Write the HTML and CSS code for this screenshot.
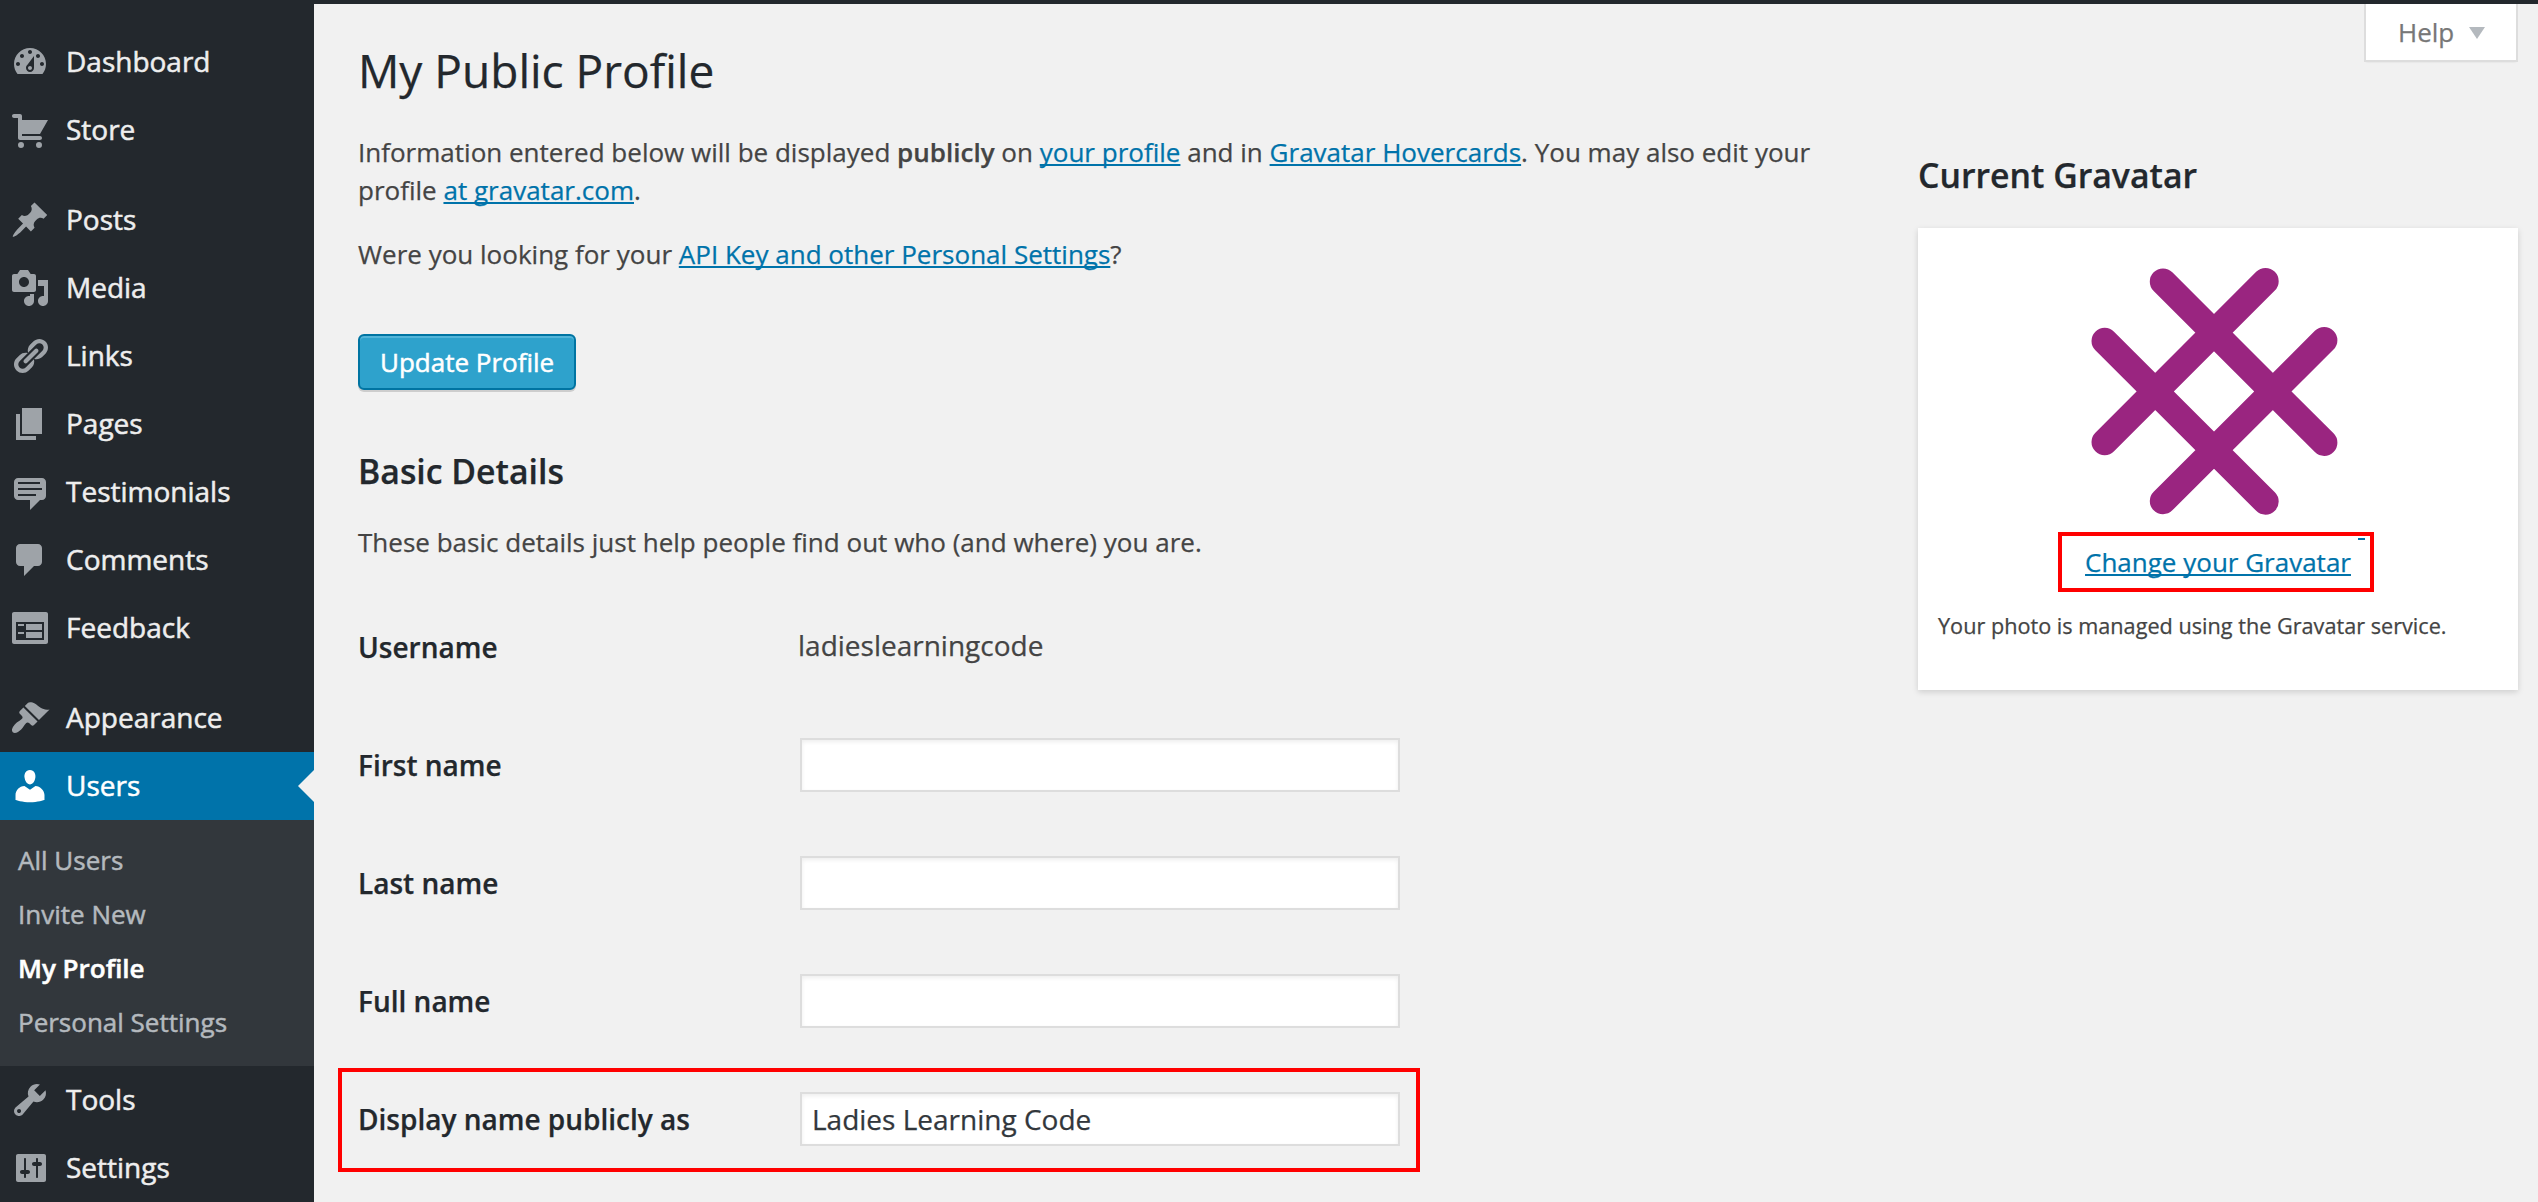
FILE: index.html
```html
<!DOCTYPE html>
<html lang="en">
<head>
<meta charset="utf-8">
<title>My Public Profile</title>
<link rel="stylesheet" href="styles.css">
</head>
<body>
<nav class="menu">
  <a class="item"><svg class="icon" viewBox="0 0 20 20"><path fill-rule="evenodd" d="M3.76 16h12.48c1.1-1.37 1.76-3.11 1.76-5 0-4.42-3.58-8-8-8s-8 3.58-8 8c0 1.89.66 3.63 1.76 5zM10 4c.55 0 1 .45 1 1s-.45 1-1 1-1-.45-1-1 .45-1 1-1zM6 6c.55 0 1 .45 1 1s-.45 1-1 1-1-.45-1-1 .45-1 1-1zm8 0c.55 0 1 .45 1 1s-.45 1-1 1-1-.45-1-1 .45-1 1-1zm-5.37 5.55L12 7v6c0 1.1-.9 2-2 2s-2-.9-2-2c0-.57.24-1.08.63-1.45zM4 10c.55 0 1 .45 1 1s-.45 1-1 1-1-.45-1-1 .45-1 1-1zm12 0c.55 0 1 .45 1 1s-.45 1-1 1-1-.45-1-1 .45-1 1-1zm-6 2c-.55 0-1 .45-1 1s.45 1 1 1 1-.45 1-1-.45-1-1-1z"/></svg><span>Dashboard</span></a>
  <a class="item"><svg class="icon" viewBox="0 0 20 20"><path d="M6 13h9c.55 0 1 .45 1 1s-.45 1-1 1H5c-.55 0-1-.45-1-1V4H2c-.55 0-1-.45-1-1s.45-1 1-1h3c.55 0 1 .45 1 1v2h13l-4 7H6v1zM5.500 16a1.500 1.500 0 1 1 0 3 1.500 1.500 0 0 1 0-3zM14.500 16a1.500 1.500 0 1 1 0 3 1.500 1.500 0 0 1 0-3z"/></svg><span>Store</span></a>
  <div class="separator"></div>
  <a class="item"><svg class="icon" viewBox="0 0 20 20"><path d="M10.440 3.020l1.820-1.820 6.360 6.350-1.830 1.820c-1.050-.68-2.480-.57-3.410.36l-.75.75c-.92.93-1.040 2.350-.35 3.410l-1.830 1.820-2.410-2.410-2.800 2.790c-.42.42-3.380 2.710-3.800 2.290s1.860-3.390 2.280-3.810l2.790-2.790L4.100 9.360l1.830-1.820c1.050.69 2.480.57 3.400-.36l.75-.75c.93-.92 1.050-2.350.36-3.410z"/></svg><span>Posts</span></a>
  <a class="item"><svg class="icon" viewBox="0 0 20 20"><path fill-rule="evenodd" d="M13 11V4c0-.55-.45-1-1-1h-1.670L9 1H5L3.670 3H2c-.55 0-1 .45-1 1v7c0 .55.45 1 1 1h10c.55 0 1-.45 1-1zM7 4.500c1.380 0 2.500 1.120 2.500 2.500S8.380 9.500 7 9.500 4.500 8.380 4.500 7 5.620 4.500 7 4.500zM14 6h5v10.500c0 1.380-1.120 2.500-2.500 2.500S14 17.880 14 16.500s1.120-2.500 2.500-2.500c.17 0 .34.02.5.05V9h-3V6zm-4 8.050V13h2v3.500c0 1.380-1.120 2.500-2.500 2.500S7 17.880 7 16.500 8.120 14 9.500 14c.17 0 .34.02.5.05z"/></svg><span>Media</span></a>
  <a class="item"><svg class="icon" viewBox="0 0 20 20"><path d="M17.740 2.760c1.680 1.690 1.680 4.410 0 6.100l-1.530 1.520c-1.120 1.120-2.700 1.470-4.140 1.090l2.620-2.610.76-.77.76-.76c.84-.84.84-2.200 0-3.040-.84-.85-2.200-.85-3.040 0l-.77.76-3.380 3.380c-.37-1.440-.02-3.020 1.100-4.140l1.520-1.530c1.690-1.680 4.420-1.680 6.100 0zM8.590 13.430l5.340-5.340c.42-.42.42-1.100 0-1.520-.44-.43-1.130-.39-1.530 0l-5.330 5.340c-.42.42-.42 1.100 0 1.520.44.43 1.130.39 1.520 0zm-.76 2.290l4.140-4.150c.38 1.440.03 3.020-1.090 4.140l-1.520 1.530c-1.690 1.680-4.410 1.680-6.100 0-1.680-1.680-1.680-4.420 0-6.100l1.530-1.520c1.120-1.120 2.700-1.470 4.140-1.100l-4.140 4.150c-.85.84-.85 2.200 0 3.050.84.84 2.200.84 3.040 0z"/></svg><span>Links</span></a>
  <a class="item"><svg class="icon" viewBox="0 0 20 20"><path d="M6 15V2h10v13H6zm-1 1h8v2H3V5h2v11z"/></svg><span>Pages</span></a>
  <a class="item"><svg class="icon" viewBox="0 0 20 20"><path fill-rule="evenodd" d="M4 3h12c.55 0 1.020.2 1.410.59S18 4.450 18 5v7c0 .55-.2 1.020-.59 1.410S16.550 14 16 14h-1l-5 5v-5H4c-.55 0-1.020-.2-1.410-.59S2 12.550 2 12V5c0-.55.2-1.020.59-1.410S3.450 3 4 3zm11 2H4v1h11V5zm1 3H4v1h12V8zm-3 3H4v1h9v-1z"/></svg><span>Testimonials</span></a>
  <a class="item"><svg class="icon" viewBox="0 0 20 20"><path d="M5 2h9c1.100 0 2 .9 2 2v7c0 1.100-.9 2-2 2h-2l-5 5v-5H5c-1.100 0-2-.9-2-2V4c0-1.100.9-2 2-2z"/></svg><span>Comments</span></a>
  <a class="item"><svg class="icon" viewBox="0 0 20 20"><path fill-rule="evenodd" d="M2 2h16c.55 0 1 .45 1 1v14c0 .55-.45 1-1 1H2c-.55 0-1-.45-1-1V3c0-.55.45-1 1-1zm15 14V7H3v9h14zM4 8v1h3V8H4zm4 0v3h8V8H8zm-4 4v1h3v-1H4zm4 0v3h8v-3H8z"/></svg><span>Feedback</span></a>
  <div class="separator"></div>
  <a class="item"><svg class="icon" viewBox="0 0 20 20"><path d="M14.480 11.060L7.410 3.990l1.500-1.500c.5-.56 2.300-.47 3.510.32 1.210.8 1.430 1.280 2.910 2.100 1.180.64 2.450 1.260 4.450.85zm-.71.71L6.700 4.700 4.930 6.470c-.39.39-.39 1.020 0 1.410l1.060 1.060c.39.39.39 1.030 0 1.420-.6.6-1.430 1.110-2.210 1.690-.35.26-.7.53-1.010.84C1.430 14.230.4 16.080 1.400 17.070c.99 1 2.840-.03 4.180-1.360.31-.31.58-.66.85-1.020.57-.78 1.080-1.610 1.690-2.210.39-.39 1.020-.39 1.410 0l1.060 1.060c.39.39 1.020.39 1.410 0z"/></svg><span>Appearance</span></a>
  <a class="item current"><svg class="icon" viewBox="0 0 20 20"><path d="M10 9.250c-2.270 0-2.730-3.440-2.730-3.440C7 4.020 7.820 2 9.970 2c2.160 0 2.980 2.020 2.710 3.810 0 0-.41 3.440-2.680 3.440zm0 2.570L12.720 10c2.390 0 4.520 2.330 4.520 4.530v2.490s-3.650 1.130-7.240 1.130c-3.650 0-7.240-1.130-7.240-1.130v-2.490c0-2.250 1.940-4.480 4.470-4.480z"/></svg><span>Users</span></a>
  <div class="submenu">
    <a>All Users</a>
    <a>Invite New</a>
    <a class="active">My Profile</a>
    <a>Personal Settings</a>
  </div>
  <a class="item"><svg class="icon" viewBox="0 0 20 20"><path fill-rule="evenodd" d="M16.680 9.770c-1.340 1.340-3.300 1.670-4.950.99l-5.410 6.520c-.99.99-2.590.99-3.580 0s-.99-2.590 0-3.570l6.520-5.420c-.68-1.650-.35-3.610.99-4.950 1.280-1.280 3.120-1.620 4.720-1.060l-2.890 2.890 2.820 2.820 2.860-2.870c.53 1.580.18 3.390-1.080 4.650zM3.810 16.210c.4.39 1.040.39 1.430 0 .4-.4.4-1.040 0-1.430-.39-.4-1.030-.4-1.430 0-.39.39-.39 1.030 0 1.430z"/></svg><span>Tools</span></a>
  <a class="item"><svg class="icon" viewBox="0 0 20 20"><path fill-rule="evenodd" d="M18 16V4c0-.55-.45-1-1-1H4c-.55 0-1 .45-1 1v12c0 .55.45 1 1 1h13c.55 0 1-.45 1-1zM8 11h1c.55 0 1 .45 1 1s-.45 1-1 1H8v1.500c0 .28-.22.5-.5.5s-.5-.22-.5-.5V13H6c-.55 0-1-.45-1-1s.45-1 1-1h1V5.500c0-.28.22-.5.5-.5s.5.22.5.5V11zm5-2h-1c-.55 0-1-.45-1-1s.45-1 1-1h1V5.500c0-.28.22-.5.5-.5s.5.22.5.5V7h1c.55 0 1 .45 1 1s-.45 1-1 1h-1v5.500c0 .28-.22.5-.5.5s-.5-.22-.5-.5V9z"/></svg><span>Settings</span></a>
</nav>
<div class="page">
  <div class="adminbar"></div>
  <div class="content">
    <main class="profile">
      <h1>My Public Profile</h1>
      <p>Information entered below will be displayed <strong>publicly</strong> on <a class="link">your profile</a> and in <a class="link">Gravatar Hovercards</a>. You may also edit your profile <a class="link">at gravatar.com</a>.</p>
      <p>Were you looking for your <a class="link">API Key and other Personal Settings</a>?</p>
      <button class="update">Update Profile</button>
      <h2>Basic Details</h2>
      <p class="hint">These basic details just help people find out who (and where) you are.</p>
      <div class="fields">
        <div class="field"><label>Username</label><span class="username">ladieslearningcode</span></div>
        <div class="field"><label>First name</label><input type="text"></div>
        <div class="field"><label>Last name</label><input type="text"></div>
        <div class="field"><label>Full name</label><input type="text"></div>
        <div class="field marked"><label>Display name publicly as</label><input type="text" value="Ladies Learning Code"></div>
      </div>
    </main>
    <aside class="side">
      <a class="help">Help<i class="caret"></i></a>
      <h2>Current Gravatar</h2>
      <div class="card">
        <div class="avatar">
          <svg width="287" height="288" viewBox="0 0 287 288"><path d="M92 29.700L253.200 190.700M194.500 29.200L33.700 190M33.700 89L194.500 249.500M253.200 88.200L92 249" stroke="#9a2580" stroke-width="26.400" stroke-linecap="round"/></svg><i class="dash"></i>
        </div>
        <p class="change"><a class="link">Change your Gravatar</a></p>
        <p class="note">Your photo is managed using the Gravatar service.</p>
      </div>
    </aside>
  </div>
</div>
</body>
</html>
```
FILE: styles.css
```css
*, *::before, *::after { box-sizing: border-box; }
body {
  margin: 0;
  display: flex;
  height: 1202px;
  overflow: hidden;
  background: #f1f1f1;
  color: #444;
  font: 26px/38px "Open Sans", sans-serif;
  -webkit-text-stroke: .25px;
}
h1, h2, p { margin: 0; }

.menu {
  width: 314px;
  flex: none;
  padding-top: 28px;
  background: #23282d;
  -webkit-text-stroke: .5px;
}
.item {
  display: flex;
  align-items: center;
  gap: 16px;
  height: 68px;
  padding-left: 10px;
  color: #eee;
  font-size: 28px;
}
.item span { margin-bottom: 3px; }
.icon { width: 40px; height: 40px; fill: #9ea3a8; }
.separator { height: 22px; }
.current { position: relative; background: #0073aa; color: #fff; }
.current .icon { fill: #fff; }
.current::after {
  content: "";
  position: absolute;
  right: 0;
  top: 18px;
  border: 16px solid transparent;
  border-left-width: 0;
  border-right-color: #f1f1f1;
}
.submenu { padding: 13px 0 17px 18px; background: #32373c; }
.submenu a { display: block; color: #b4b9be; line-height: 54px; }
.submenu .active { color: #fff; font-weight: 600; }

.page { flex: 1; }
.adminbar { height: 4px; background: #23282d; }
.content { display: flex; justify-content: space-between; padding: 0 20px 0 44px; }

.profile { width: 1470px; padding-top: 37px; }
h1 { margin-bottom: 34px; color: #23282d; font-size: 46px; font-weight: 400; line-height: 58px; }
.profile p { font-size: 26.02px; }
.profile p + p { margin-top: 26px; }
strong { font-weight: 600; }
.link {
  color: #0073aa;
  text-decoration: underline;
  text-decoration-thickness: 2px;
  text-underline-offset: 2px;
  text-decoration-skip-ink: none;
}
.update {
  display: block;
  height: 56px;
  margin: 61px 0 58px;
  padding: 0 20px;
  border: 2px solid #0074a2;
  border-radius: 6px;
  background: #2ea2cc;
  box-shadow: inset 0 2px 0 rgba(120, 200, 230, .5), 0 2px 0 rgba(0, 0, 0, .15);
  color: #fff;
  font: 26px/52px "Open Sans", sans-serif;
  -webkit-text-stroke: .5px;
}
h2 { color: #23282d; font-size: 33.8px; font-weight: 600; line-height: 46px; }
.profile .hint { margin-top: 29px; }

.fields { margin-top: 27px; }
.field { display: flex; align-items: center; height: 118px; font-size: 28px; }
.field label { width: 442px; color: #23282d; font-weight: 600; }
.username { margin: 0 0 5px -2px; }
.field input {
  width: 600px;
  height: 54px;
  padding: 0 10px;
  border: 2px solid #ddd;
  background: #fff;
  box-shadow: inset 0 2px 4px rgba(0, 0, 0, .07);
  color: #32373c;
  font: 28px "Open Sans", sans-serif;
}
.marked { position: relative; }
.marked::before {
  content: "";
  position: absolute;
  left: -20px;
  top: 8px;
  width: 1082px;
  height: 104px;
  border: 4px solid #f00;
}

.side { display: flex; flex-direction: column; width: 600px; }
.help {
  display: flex;
  align-items: center;
  align-self: flex-end;
  gap: 15px;
  width: 154px;
  height: 58px;
  padding: 0 0 1px 32px;
  border: 2px solid #ddd;
  border-top: 0;
  background: #fff;
  box-shadow: 0 2px 2px -2px rgba(0, 0, 0, .1);
  color: #777;
}
.caret { margin-top: 2px; border: 8px solid transparent; border-top: 12px solid #b4b9be; border-bottom: 0; }
.side h2 { margin: 90px 0 30px; }
.card { height: 462px; padding: 24px 20px 0; background: #fff; box-shadow: 0 2px 6px rgba(0, 0, 0, .15); }
.avatar { display: flex; justify-content: center; align-items: flex-end; }
.avatar svg { display: block; }
.dash { width: 7px; height: 2px; background: #0073aa; }
.change { position: relative; margin-top: 3px; text-align: center; }
.change::before {
  content: "";
  position: absolute;
  left: 120px;
  top: -11px;
  width: 316px;
  height: 60px;
  border: 4px solid #f00;
}
.note { margin-top: 28px; font-size: 21.67px; line-height: 33px; }
```
